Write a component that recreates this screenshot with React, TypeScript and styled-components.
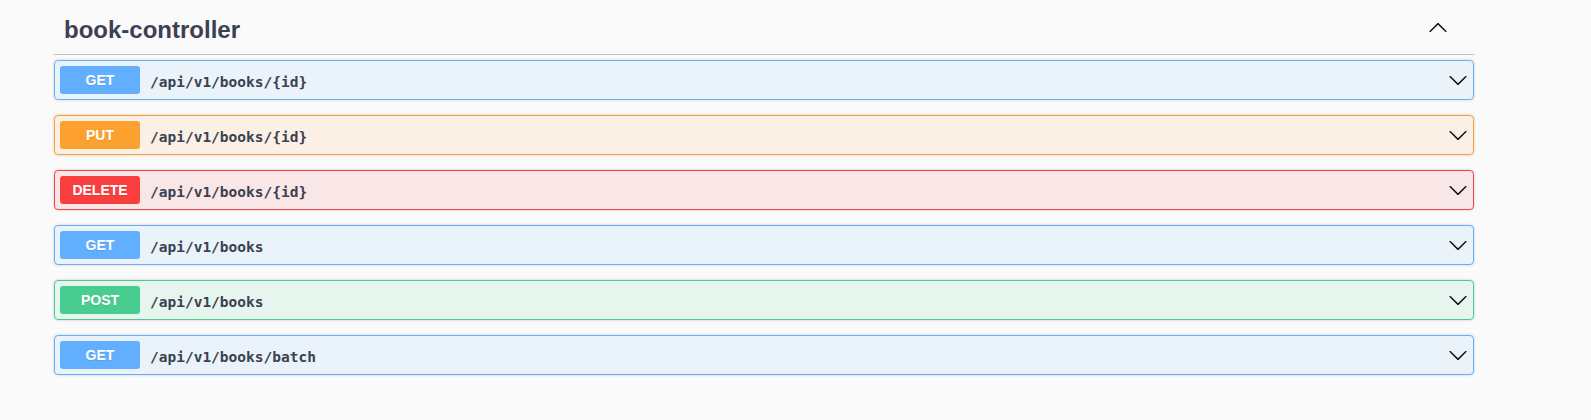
import { createGlobalStyle, styled } from "styled-components";

type Method = "get" | "put" | "delete" | "post";

interface Operation {
  method: Method;
  path: string;
}

const colors: Record<Method, string> = {
  get: "97, 175, 254",
  put: "252, 161, 48",
  delete: "249, 62, 62",
  post: "73, 204, 144",
};

const operations: Operation[] = [
  { method: "get", path: "/api/v1/books/{id}" },
  { method: "put", path: "/api/v1/books/{id}" },
  { method: "delete", path: "/api/v1/books/{id}" },
  { method: "get", path: "/api/v1/books" },
  { method: "post", path: "/api/v1/books" },
  { method: "get", path: "/api/v1/books/batch" },
];

function ArrowUp() {
  return (
    <svg width="20" height="20" viewBox="0 0 20 20" aria-hidden="true">
      <path d="M17.418 14.908c.272.268.709.268.979 0s.271-.701 0-.969l-7.908-7.83c-.27-.268-.707-.268-.979 0l-7.908 7.83c-.27.268-.27.701 0 .969.271.268.709.268.979 0L10 7.767l7.418 7.141z" />
    </svg>
  );
}

function ArrowDown() {
  return (
    <svg width="20" height="20" viewBox="0 0 20 20" aria-hidden="true">
      <path d="M17.418 6.109c.272-.268.709-.268.979 0s.271.701 0 .969l-7.908 7.83c-.27.268-.707.268-.979 0l-7.908-7.83c-.27-.268-.27-.701 0-.969.271-.268.709-.268.979 0L10 13.25l7.418-7.141z" />
    </svg>
  );
}

export default function App() {
  return (
    <>
      <GlobalStyle />
      <Wrapper>
        <TagHeading>
          <TagName>book-controller</TagName>
          <HeadingToggle>
            <ArrowUp />
          </HeadingToggle>
        </TagHeading>
        {operations.map((op, i) => (
          <OpBlock key={i} $rgb={colors[op.method]}>
            <MethodBadge $rgb={colors[op.method]}>
              {op.method.toUpperCase()}
            </MethodBadge>
            <PathText>{op.path}</PathText>
            <RowToggle>
              <ArrowDown />
            </RowToggle>
          </OpBlock>
        ))}
      </Wrapper>
    </>
  );
}

const GlobalStyle = createGlobalStyle`
  html, body {
    margin: 0;
    min-height: 100%;
    background: #fafafa;
  }
  body {
    font-family: "Liberation Sans", Arial, sans-serif;
    color: #3b4151;
  }
`;

const Wrapper = styled.div`
  width: 1420px;
  margin-left: 54px;
`;

const TagHeading = styled.h4`
  display: flex;
  align-items: flex-start;
  margin: 0 0 5px;
  padding: 16px 26px 11px 10px;
  border-bottom: 1px solid rgba(59, 65, 81, 0.3);
  font-size: 24px;
  line-height: 27px;
  font-weight: 700;
  color: #3b4151;
`;

const TagName = styled.span`
  flex: 1;
`;

const HeadingToggle = styled.span`
  display: flex;
  margin-top: 1px;
  fill: #111;
`;

const OpBlock = styled.div<{ $rgb: string }>`
  display: flex;
  align-items: center;
  margin-bottom: 15px;
  padding: 5px;
  border: 1px solid rgb(${(p) => p.$rgb});
  border-radius: 4px;
  background: rgba(${(p) => p.$rgb}, 0.1);
  box-shadow: 0 0 3px rgba(0, 0, 0, 0.19);
`;

const MethodBadge = styled.span<{ $rgb: string }>`
  min-width: 80px;
  padding: 6px 0;
  border-radius: 3px;
  background: rgb(${(p) => p.$rgb});
  color: #fff;
  font-family: "Liberation Sans", Arial, sans-serif;
  font-size: 14px;
  line-height: 16px;
  font-weight: 700;
  text-align: center;
  text-shadow: 0 1px 0 rgba(0, 0, 0, 0.1);
`;

const PathText = styled.span`
  flex: 1;
  padding: 3px 10px 0;
  font-family: "DejaVu Sans Mono", "Liberation Mono", monospace;
  font-size: 14.5px;
  font-weight: 700;
  color: #3b4151;
`;

const RowToggle = styled.span`
  display: flex;
  fill: #111;
`;
